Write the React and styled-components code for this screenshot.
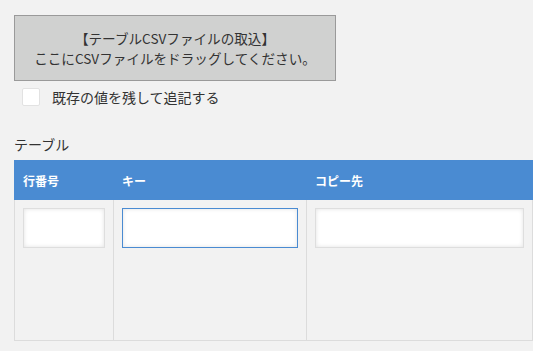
import styled, { createGlobalStyle } from "styled-components";

const GlobalStyle = createGlobalStyle`
  html, body {
    margin: 0;
    padding: 0;
    background: #f2f2f2;
    font-family: "Noto Sans CJK JP", "Noto Sans", sans-serif;
    color: #333;
  }
`;

const Page = styled.div`
  width: 533px;
  height: 351px;
  overflow: hidden;
  padding: 15px 0 0 14px;
  box-sizing: border-box;
`;

const DropZone = styled.div`
  width: 322px;
  height: 66px;
  box-sizing: border-box;
  background: #d0d1d0;
  border: 1px solid #9a9a9a;
  display: flex;
  flex-direction: column;
  align-items: center;
  justify-content: center;
  font-size: 13.6px;
  line-height: 20px;
  color: #333;
`;

const CheckRow = styled.label`
  display: flex;
  align-items: center;
  gap: 12px;
  margin: 6px 0 0 8px;
  font-size: 14px;
  height: 20px;
`;

const CheckBox = styled.span`
  width: 18px;
  height: 18px;
  box-sizing: border-box;
  background: #fff;
  border: 1px solid #e2e2e2;
  border-radius: 2px;
`;

const SectionTitle = styled.div`
  font-size: 14px;
  margin-top: 25px;
  height: 24px;
  line-height: 24px;
`;

const Table = styled.div`
  display: grid;
  grid-template-columns: 99px 193px 227px;
  margin-top: 4px;
  width: 519px;
  border-bottom: 1px solid #dcdcdc;
`;

const HeadCell = styled.div`
  background: #4a8bd2;
  color: #fff;
  font-size: 12px;
  font-weight: 600;
  height: 40px;
  display: flex;
  align-items: center;
  padding-left: 9px;
`;

const BodyCell = styled.div`
  height: 140px;
  box-sizing: border-box;
  padding: 8px 8px 0 8px;
  border-left: 1px solid #dcdcdc;
  border-right: ${(p) => (p.$last ? "1px solid #dcdcdc" : "none")};
`;

const Field = styled.div`
  height: 40px;
  box-sizing: border-box;
  background: #fff;
  border: 1px solid ${(p) => (p.$focused ? "#4a8bd2" : "#dedede")};
  box-shadow: inset 0 0 4px rgba(0, 0, 0, 0.12);
`;

export default function App() {
  return (
    <>
      <GlobalStyle />
      <Page>
        <DropZone>
          <div>【テーブルCSVファイルの取込】</div>
          <div>ここにCSVファイルをドラッグしてください。</div>
        </DropZone>
        <CheckRow>
          <CheckBox />
          既存の値を残して追記する
        </CheckRow>
        <SectionTitle>テーブル</SectionTitle>
        <Table>
          <HeadCell>行番号</HeadCell>
          <HeadCell>キー</HeadCell>
          <HeadCell>コピー先</HeadCell>
          <BodyCell>
            <Field />
          </BodyCell>
          <BodyCell>
            <Field $focused />
          </BodyCell>
          <BodyCell $last>
            <Field />
          </BodyCell>
        </Table>
      </Page>
    </>
  );
}
